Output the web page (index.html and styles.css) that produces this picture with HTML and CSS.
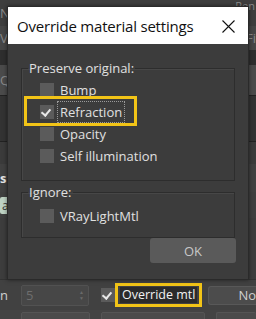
FILE: index.html
```html
<!DOCTYPE html>
<html lang="en">
<head>
    <meta charset="UTF-8">
    <meta name="viewport" content="width=device-width, initial-scale=1.0">
    <title>Override material settings</title>
    <link rel="stylesheet" href="styles.css">
</head>
<body>
    <div class="app">
        <div class="strip s1"><span class="edge-l">N</span><span class="edge-r top-cut">Ren</span></div>
        <div class="strip s2"><span class="edge-l">V</span><span class="edge-r">Fi</span></div>
        <div class="strip s3"></div>
        <div class="strip s4"><span class="edge-l">Q</span></div>
        <div class="strip s5"></div>
        <div class="strip s6"></div>
        <div class="strip s7"><span class="edge-l bold">s</span></div>
        <div class="strip s8"><span class="edge-r green">alu</span></div>
        <div class="strip s9"></div>
        <div class="bottom-row">
            <span class="cut-label">n</span>
            <div class="spinner">5<span class="arrows">&#9650;<br>&#9660;</span></div>
            <span class="box checked small"></span>
            <div class="hl-outline"><span class="dark-label">Override mtl</span></div>
            <div class="no-btn">No</div>
        </div>
        <div class="bottom-row2">
            <span class="stub a"></span>
            <span class="stub b"></span>
            <span class="stub c"></span>
        </div>
    </div>

    <div class="dialog">
        <div class="titlebar">
            <span class="title">Override material settings</span>
            <svg class="close" width="13" height="13" viewBox="0 0 13 13">
                <path d="M0.5 0.5 L12.5 12.5 M12.5 0.5 L0.5 12.5" stroke="#111" stroke-width="1.1" fill="none"/>
            </svg>
        </div>
        <div class="body">
            <fieldset class="group g1">
                <legend>Preserve original:</legend>
                <div class="row"><span class="box"></span><span class="lbl">Bump</span></div>
                <div class="row focus-row">
                    <span class="highlight"></span>
                    <span class="box checked"></span><span class="lbl focused">Refraction</span>
                </div>
                <div class="row"><span class="box"></span><span class="lbl">Opacity</span></div>
                <div class="row"><span class="box"></span><span class="lbl">Self illumination</span></div>
            </fieldset>
            <fieldset class="group g2">
                <legend>Ignore:</legend>
                <div class="row"><span class="box"></span><span class="lbl">VRayLightMtl</span></div>
            </fieldset>
            <div class="actions"><button class="ok">OK</button></div>
        </div>
    </div>
</body>
</html>
```

FILE: styles.css
```css
/* page + background app */
body {
    margin: 0;
    width: 256px;
    height: 319px;
    overflow: hidden;
    background-color: #444444;
    font-family: "Open Sans", "Noto Sans", sans-serif;
    color: #dedede;
    position: relative;
}
.app {
    display: flex;
    flex-direction: column;
}
.strip {
    display: flex;
    justify-content: space-between;
    align-items: center;
    font-size: 13px;
    color: #8a8a8a;
    overflow: hidden;
}
.s1 { height: 26px; background-color: #3e3e3e; }
.s2 { height: 24px; background-color: #464646; }
.s3 { height: 15px; background-color: #2e2e2e; }
.s4 { height: 30px; background-color: #4b4b4b; }
.s5 { height: 45px; background-color: #333333; border-top: 1px solid #222; border-bottom: 1px solid #222; }
.s6 { height: 22px; background-color: #3b3b3b; }
.s7 { height: 28px; background-color: #414141; }
.s8 { height: 26px; background-color: #3f3f3f; }
.s9 { height: 61px; background-color: #3d3d3d; border-bottom: 1px solid #333; }
.top-cut { align-self: flex-start; font-size: 11px; line-height: 12px; margin-right: 1px; }
.bold { color: #e6e6e6; font-weight: bold; }
.green {
    background-color: #bfd3c4;
    color: #333;
    padding: 0 2px;
    border-radius: 2px 0 0 2px;
    font-size: 12px;
}

.bottom-row {
    height: 30px;
    display: flex;
    align-items: center;
    background-color: #414141;
}
.bottom-row > * { flex-shrink: 0; }
.cut-label {
    width: 18px;
    font-size: 13px;
    color: #cfcfcf;
}
.spinner {
    width: 62px;
    height: 19px;
    margin-left: 3px;
    background-color: #474747;
    border: 1px solid #525252;
    border-radius: 2px;
    color: #6e6e6e;
    font-size: 13px;
    line-height: 19px;
    padding-left: 4px;
    position: relative;
}
.arrows {
    position: absolute;
    right: 4px;
    top: 3px;
    font-size: 5px;
    line-height: 6px;
    color: #6a6a6a;
}
.box.small { margin-left: 12px; }
.hl-outline {
    border: 3px solid #f2c417;
    padding: 1px 2px;
}
.dark-label {
    display: block;
    background-color: #2b2b2b;
    color: #f2f2f2;
    font-size: 12.5px;
    line-height: 16px;
    padding: 0 2px;
    white-space: nowrap;
}
.no-btn {
    flex: 1 1 0;
    min-width: 0;
    margin-left: 6px;
    height: 17px;
    background-color: #4c4c4c;
    border: 1px solid #585858;
    border-right: none;
    border-radius: 3px 0 0 3px;
    font-size: 13px;
    line-height: 17px;
    text-align: right;
    color: #cfcfcf;
    white-space: nowrap;
}
.bottom-row2 {
    display: flex;
    gap: 11px;
    padding-left: 21px;
    padding-top: 2px;
}
.stub { height: 10px; background-color: #4b4b4b; border: 1px solid #555; border-radius: 2px; }
.stub.a { width: 67px; flex-shrink: 0; }
.stub.b { width: 102px; flex-shrink: 0; }
.stub.c { flex: 1 1 0; min-width: 0; border-right: none; }

/* dialog (overlays the app) */
.dialog {
    position: absolute;
    left: 7px;
    top: 6px;
    width: 240px;
    height: 272px;
    background-color: #3c3c3c;
    border: 1px solid #2a2a2a;
    box-shadow: 0 0 4px rgba(0, 0, 0, 0.5);
}
.titlebar {
    height: 37px;
    background-color: #ffffff;
    display: flex;
    align-items: center;
    justify-content: space-between;
    padding: 0 13px 0 9px;
}
.title {
    font-family: "Open Sans", "Noto Sans", sans-serif;
    font-size: 15px;
    color: #111;
    letter-spacing: -0.2px;
}
.close { margin-top: 1px; }
.body {
    padding: 16px 13px 0 13px;
}
.group {
    margin: 0;
    border: 1px solid #2d2d2d;
    box-shadow: inset 1px 1px 0 #474747;
    padding: 3px 0 13px 18px;
}
.group legend {
    font-size: 13px;
    line-height: 16px;
    padding: 0 1px;
    margin-left: -12px;
    color: #e0e0e0;
}
.g2 {
    margin-top: 3px;
    padding-top: 5px;
    padding-bottom: 10px;
}
.row {
    height: 22px;
    display: flex;
    align-items: center;
    position: relative;
    font-size: 13px;
}
.box {
    width: 14px;
    height: 14px;
    background-color: #5b5b5b;
    flex-shrink: 0;
    position: relative;
}
.box.checked::after {
    content: "";
    position: absolute;
    left: 3px;
    top: 2px;
    width: 4px;
    height: 7px;
    border-right: 2.5px solid #e8e8e8;
    border-bottom: 2.5px solid #e8e8e8;
    transform: rotate(40deg);
}
.lbl {
    margin-left: 6px;
    color: #e0e0e0;
}
.lbl.focused {
    margin-left: 4px;
    padding: 1px 2px;
    outline: 1px dotted #9a9a9a;
}
.highlight {
    position: absolute;
    left: -16px;
    top: -5px;
    width: 107px;
    height: 24px;
    border: 3px solid #f2c417;
}
.actions {
    display: flex;
    justify-content: flex-end;
}
.ok {
    width: 86px;
    height: 25px;
    margin-right: -1px;
    background-color: #5a5a5a;
    border: none;
    border-radius: 3px;
    color: #c8c8c8;
    font-family: "Open Sans", "Noto Sans", sans-serif;
    font-size: 13px;
}
```
